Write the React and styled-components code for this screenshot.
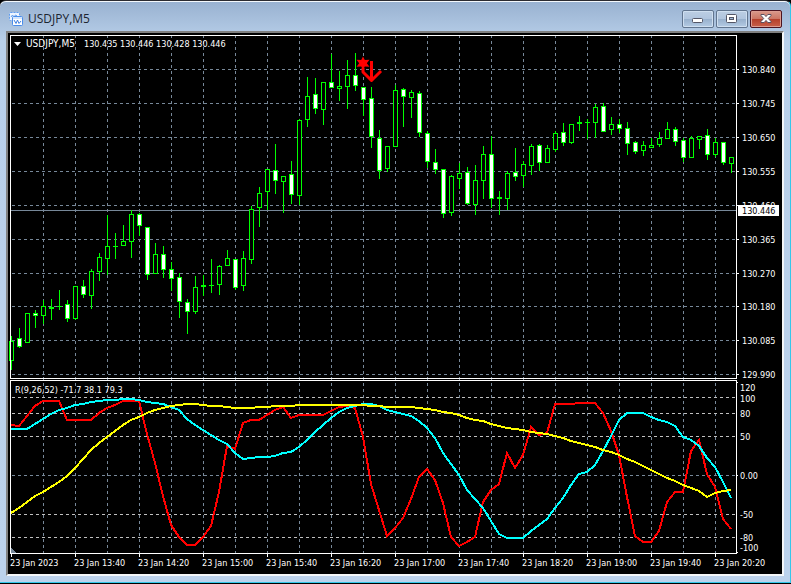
import React from "react";
import styled, { createGlobalStyle } from "styled-components";

const GlobalStyle = createGlobalStyle`
  * {
    box-sizing: border-box;
  }
  body {
    margin: 0;
    background-color: #000;
  }
`
const Window = styled.main`
  padding: 0 6px 6px;
  border-top: 1px solid #2b2b30;
  border-right: 1px solid #35c7ea;
  border-bottom: 1px solid #35c7ea;
  border-radius: 6px 6px 0 0;
  background: linear-gradient(#98b1d0, #b9d0ea 40px, #bcd2ec);
  box-shadow: inset 0 1px 0 #f4f8fc;
`
const TitleBar = styled.header`
  height: 30px;
  padding: 0 2px 0 3px;
  display: flex;
  align-items: center;
  justify-content: space-between;
`
const Caption = styled.div`
  padding-top: 6px;
  display: flex;
  align-items: center;
  gap: 5px;
`
const Title = styled.h1`
  margin: 0;
  font: 400 12px/16px "Open Sans", "Noto Sans", sans-serif;
  color: #1c2430;
`
const Controls = styled.div`
  padding-top: 6px;
  display: flex;
  gap: 2px;
`
const ControlButton = styled.button`
  width: 32px;
  height: 18px;
  padding: 0;
  display: flex;
  align-items: center;
  justify-content: center;
  border: 1px solid ${(props) => (props.$danger ? "#4c1420" : "#61758f")};
  border-radius: 2px;
  box-shadow: inset 0 0 0 1px ${(props) => (props.$danger ? "#dc9c90" : "#cfdff0")};
  background: ${(props) =>
    props.$danger
      ? "linear-gradient(#d99a8c, #cc7664 48%, #b5402b 52%, #c8604a)"
      : "linear-gradient(#bccee3, #b0c5de 48%, #98b1cd 52%, #b4cbe4)"};
`
const ChartFrame = styled.section`
  border: 2px solid;
  border-color: #808080 #f4f6f8 #f4f6f8 #808080;
  background-color: #000;
`
const Chart = styled.svg`
  display: block;
  width: 100%;
  height: auto;
  shape-rendering: crispEdges;
`
const Grid = styled.path`
  fill: none;
  stroke: ${(props) => props.$color || "#778899"};
  stroke-dasharray: 3 3;
`
const Axis = styled.path`
  fill: none;
  stroke: #fff;
`
const Label = styled.text`
  font-family: "DejaVu Sans Condensed", "DejaVu Sans", sans-serif;
  font-size: ${(props) => (props.$large ? 10 : 9)}px;
  fill: ${(props) => props.$color || "#fff"};
`
const Series = styled.polyline`
  fill: none;
  stroke: ${(props) => props.$color};
  stroke-width: 2;
`
const Smooth = styled.g`
  shape-rendering: auto;
`

const STEP = 8;
const FIRST_X = 11;

// high, low, body top, body bottom, 1 when the candle closed down
const candles = [
  [336, 370, 341, 361, 0], [328, 348, 338, 347, 1], [313, 343, 313, 343, 0], [310, 328, 313, 316, 1],
  [300, 324, 306, 316, 0], [299, 320, 307, 309, 0], [290, 310, 306, 307, 0], [300, 322, 304, 319, 1],
  [286, 320, 286, 319, 0], [280, 298, 286, 295, 1], [269, 309, 271, 296, 0], [253, 281, 257, 272, 0],
  [215, 275, 246, 259, 0], [233, 259, 246, 247, 0], [225, 246, 241, 246, 0], [210, 258, 214, 242, 0],
  [213, 236, 214, 226, 1], [227, 280, 227, 275, 1], [243, 274, 254, 274, 0], [246, 278, 254, 270, 1],
  [262, 291, 269, 279, 1], [273, 318, 277, 302, 1], [299, 334, 302, 312, 1], [276, 314, 287, 312, 0],
  [275, 296, 285, 287, 0], [259, 293, 285, 286, 0], [265, 295, 266, 285, 0], [250, 266, 258, 266, 0],
  [259, 290, 259, 288, 1], [251, 291, 258, 286, 0], [206, 264, 209, 260, 0], [187, 227, 193, 208, 0],
  [169, 210, 169, 192, 0], [144, 194, 170, 181, 1], [176, 213, 176, 182, 0], [161, 204, 174, 195, 1],
  [119, 205, 120, 196, 0], [77, 127, 96, 120, 0], [78, 114, 94, 109, 1], [82, 125, 82, 110, 0],
  [54, 88, 82, 88, 1], [71, 101, 86, 89, 0], [60, 109, 75, 87, 0], [53, 91, 75, 86, 1],
  [87, 116, 87, 100, 1], [87, 148, 98, 137, 1], [130, 179, 138, 171, 1], [146, 172, 146, 169, 0],
  [85, 147, 90, 147, 0], [88, 127, 89, 97, 1], [90, 118, 92, 98, 0], [91, 137, 93, 133, 1],
  [131, 168, 133, 162, 1], [149, 174, 162, 170, 1], [169, 218, 169, 214, 1], [175, 216, 176, 213, 0],
  [163, 189, 173, 179, 0], [167, 205, 172, 204, 1], [165, 215, 180, 205, 0], [146, 199, 154, 181, 0],
  [136, 208, 154, 199, 1], [191, 215, 197, 199, 0], [171, 210, 173, 199, 0], [148, 181, 172, 177, 1],
  [161, 187, 164, 176, 0], [144, 175, 146, 166, 0], [144, 171, 145, 163, 1], [145, 163, 148, 163, 0],
  [131, 152, 133, 150, 0], [123, 146, 132, 143, 1], [124, 144, 124, 143, 0], [116, 131, 122, 124, 0],
  [119, 139, 122, 123, 0], [104, 138, 107, 123, 0], [103, 132, 106, 132, 1], [117, 135, 124, 130, 0],
  [119, 133, 124, 129, 1], [122, 155, 128, 144, 1], [141, 154, 142, 152, 1], [141, 156, 145, 151, 0],
  [138, 148, 145, 148, 0], [132, 147, 138, 145, 0], [122, 139, 129, 139, 0], [127, 146, 129, 142, 1],
  [138, 162, 140, 158, 1], [136, 158, 138, 158, 0], [136, 149, 136, 140, 0], [129, 160, 135, 155, 1],
  [138, 157, 142, 155, 0], [142, 165, 142, 163, 1], [157, 173, 157, 164, 0],
];

const fast = [
  425, 426, 416, 406, 401, 401, 401, 420, 420, 420, 420, 413, 408, 405, 401, 401, 401, 434, 463, 496,
  525, 537, 545, 545, 537, 526, 492, 446, 449, 423, 420, 420, 415, 410, 407, 418, 415, 415, 415, 415,
  411, 407, 406, 408, 437, 484, 510, 536, 528, 518, 499, 477, 469, 480, 503, 537, 546, 542, 537, 502,
  490, 484, 453, 468, 455, 427, 435, 433, 404, 404, 404, 403, 403, 403, 413, 431, 455, 497, 536, 542,
  542, 531, 502, 492, 492, 451, 440, 474, 487, 519, 529,
];
const middle = [
  429, 429, 429, 424, 419, 414, 410, 408, 405, 404, 402, 401, 400, 400, 399, 399, 400, 402, 403, 404,
  407, 410, 419, 425, 430, 435, 440, 444, 453, 459, 458, 457, 457, 456, 453, 452, 447, 440, 432, 425,
  418, 412, 408, 406, 404, 404, 406, 410, 412, 414, 416, 421, 428, 438, 453, 464, 475, 490, 499, 508,
  521, 534, 538, 538, 538, 531, 525, 519, 508, 498, 485, 474, 472, 465, 451, 436, 420, 413, 413, 413,
  417, 420, 422, 426, 437, 440, 446, 458, 467, 482, 498,
];
const slow = [
  513, 508, 502, 496, 492, 487, 482, 476, 468, 459, 450, 443, 437, 431, 425, 420, 417, 413, 410, 408,
  406, 405, 404, 404, 405, 406, 406, 407, 408, 408, 408, 407, 407, 406, 406, 406, 405, 405, 405, 405,
  405, 405, 405, 405, 405, 406, 406, 407, 407, 407, 407, 408, 409, 410, 412, 413, 415, 418, 420, 421,
  424, 426, 428, 429, 430, 432, 433, 434, 436, 438, 441, 443, 445, 447, 450, 452, 455, 459, 462, 466,
  470, 474, 478, 481, 485, 488, 491, 497, 493, 491, 490,
];

const prices = [
  ["130.840", 69], ["130.745", 103], ["130.650", 137], ["130.555", 171], ["130.460", 205],
  ["130.365", 239], ["130.270", 273], ["130.180", 306], ["130.085", 340], ["129.990", 374],
];
const levels = [
  ["120", 387], ["100", 398], ["80", 413], ["50", 436], ["0.00", 475], ["-50", 514], ["-80", 537], ["-100", 547],
];
const times = [
  "2023", "13:40", "14:20", "15:00", "15:40", "16:20", "17:00", "17:40", "18:20", "19:00", "19:40", "20:20",
];

const toPoints = (values) => values.map((y, i) => `${FIRST_X + i * STEP},${y}`).join(" ");
const rule = (y) => `M12 ${y + 0.5}H736`;

const verticals = Array.from({ length: 22 }, (_, i) => `M${43.5 + i * 32} 35V553`).join("");

const Candle = ({ x, data }) => {
  const [high, low, top, bottom, down] = data;
  return (
    <g>
      <rect x={x} y={high} width="1" height={low - high} fill="#00ff00" />
      <rect x={x - 2} y={top} width="5" height={bottom - top} fill="#00ff00" />
      {bottom - top > 2 && (
        <rect x={x - 1} y={top + 1} width="3" height={bottom - top - 2} fill={down ? "#fff" : "#000"} />
      )}
    </g>
  );
};

const ChartIcon = () => (
  <svg width="14" height="14" viewBox="0 0 14 14" fill="none" aria-hidden="true">
    <rect x="0.5" y="0.5" width="10" height="8" rx="1" fill="#eef5ff" stroke="#5f9df0" strokeDasharray="2 1" />
    <path d="M2 5l1.5-2L5 5l1.5-2L8 4" stroke="#5f9df0" />
    <rect x="3.5" y="4.5" width="10" height="9" rx="1" fill="#fff" stroke="#4a8dea" />
    <path d="M4 6h9" stroke="#a9ccfa" />
    <path d="M5 8l2 3.5L8.5 8l1.5 3.5L12 9" stroke="#3f7fe0" />
  </svg>
);

const MinimizeIcon = () => (
  <svg width="12" height="12" viewBox="0 0 12 12" aria-hidden="true">
    <rect x="0.5" y="5.5" width="10" height="4" rx="1" fill="#fff" stroke="#535666" />
  </svg>
);

const RestoreIcon = () => (
  <svg width="12" height="12" viewBox="0 0 12 12" aria-hidden="true">
    <rect x="0.5" y="1.5" width="10" height="8" rx="1" fill="#fff" stroke="#535666" />
    <rect x="3.5" y="4.5" width="4" height="2" fill="#9fb9d6" stroke="#535666" />
  </svg>
);

const CloseIcon = () => (
  <svg width="12" height="12" viewBox="0 0 12 12" aria-hidden="true">
    <path
      d="M1 1.5h3.2L6 3.6 7.8 1.5H11v1L8.3 5.5 11 8.500v1H7.800L6 7.400 4.200 9.500H1v-1l2.700-3L1 2.500z"
      fill="#fff"
      stroke="#5a5060"
    />
  </svg>
);

const PricePanel = () => (
  <g>
    <Grid d={prices.map((p) => rule(p[1])).join("")} />
    <path d="M11 210.5H736" stroke="#778899" />
    {candles.map((data, i) => (
      <Candle key={i} x={FIRST_X + i * STEP} data={data} />
    ))}
    <Smooth>
      <path
        d="M363 56.5l1.8 3.5 4.7-.2-2.7 3.4 2.7 3.6-4.7-.2L363 70l-1.8-3.4-4.7.2 2.7-3.6-2.7-3.4 4.7.2z"
        fill="#f00"
      />
      <path d="M371.5 61V79" stroke="#f00" strokeWidth="3" />
      <path d="M363 68v4l8.5 8.500 9.500-9.500" stroke="#f00" strokeWidth="3" strokeLinejoin="round" fill="none" />
      <path d="M14 42h7l-3.5 4z" fill="#fff" />
    </Smooth>
    <Label x="26" y="47" $large>USDJPY,M5</Label>
    <Label x="84" y="47">130.435 130.446 130.428 130.446</Label>
  </g>
);

const IndicatorPanel = () => (
  <g>
    <Grid $color="#c0c0c0" d={[397, 413, 436, 514, 537].map(rule).join("")} />
    <Grid d={rule(475)} />
    <Series $color="#ff0000" points={toPoints(fast)} />
    <Series $color="#00ffff" points={toPoints(middle)} />
    <Series $color="#ffff00" points={toPoints(slow)} />
    <path d="M11 548l5 5h-5z" fill="#778899" />
    <Label x="15" y="393">R(9,26,52) -71.7 38.1 79.3</Label>
  </g>
);

const Axes = () => (
  <g>
    <Axis d="M10.5 378.5V35.5H736.5V378.5zM10.5 380.5H736.5V553.5H10.5z" />
    <Axis d={prices.map((p) => `M737 ${p[1] + 0.5}h2`).join("")} />
    <Axis d="M737 382.5h1M737 475.5h1M737 552.5h1" />
    <Axis d={times.map((_, i) => `M${11.5 + i * 64} 554v3`).join("")} />
    {prices.map(([text, y]) => (
      <Label key={text} x="742" y={y + 4}>{text}</Label>
    ))}
    <rect x="738" y="205" width="41" height="11" fill="#fff" />
    <Label x="742" y="214" $color="#000">130.446</Label>
    {levels.map(([text, y]) => (
      <Label key={text} x="740" y={y + 4}>{text}</Label>
    ))}
    {times.map((time, i) => (
      <Label key={time} x={10 + i * 64} y="566">{`23 Jan ${time}`}</Label>
    ))}
  </g>
);

const App = () => {
  return (
    <>
      <GlobalStyle />
      <Window>
        <TitleBar>
          <Caption>
            <ChartIcon />
            <Title>USDJPY,M5</Title>
          </Caption>
          <Controls>
            <ControlButton type="button" aria-label="Minimize">
              <MinimizeIcon />
            </ControlButton>
            <ControlButton type="button" aria-label="Restore">
              <RestoreIcon />
            </ControlButton>
            <ControlButton type="button" aria-label="Close" $danger>
              <CloseIcon />
            </ControlButton>
          </Controls>
        </TitleBar>
        <ChartFrame>
          <Chart viewBox="8 33 774 541">
            <Grid d={verticals} />
            <PricePanel />
            <IndicatorPanel />
            <Axes />
          </Chart>
        </ChartFrame>
      </Window>
    </>
  );
};

export default App;
